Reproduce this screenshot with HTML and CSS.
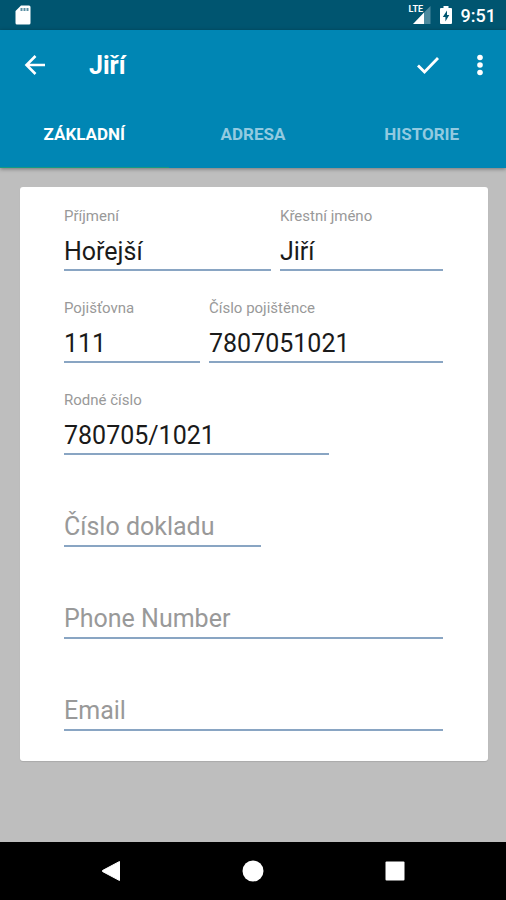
FILE: index.html
```html
<!DOCTYPE html>
<html lang="cs">
<head>
  <meta charset="UTF-8">
  <meta name="viewport" content="width=device-width, initial-scale=1.0">
  <title>Jiří</title>
  <link rel="stylesheet" href="styles.css">
</head>
<body>
  <!-- Status bar -->
  <div class="status-bar">
    <svg class="sd-icon" width="16" height="20" viewBox="0 0 16 20">
      <path d="M6 0.5H14a1.5 1.5 0 0 1 1.500 1.500V18a1.500 1.500 0 0 1-1.500 1.500H2A1.500 1.500 0 0 1 0.500 18V6z" fill="#fff"/>
      <path d="M6.500 3v3M9.500 3v3M12.500 3v3" stroke="#5a8fa3" stroke-width="2"/>
    </svg>
    <div class="status-right">
      <div class="signal">
        <svg width="18" height="18" viewBox="0 0 18 18">
          <path d="M17.500 0V18H11V6.500z" fill="#4d8a9e"/>
          <path d="M11 6.500V18H0z" fill="#fff"/>
        </svg>
        <span class="lte">LTE</span>
      </div>
      <svg width="12" height="18" viewBox="0 0 12 18">
        <path d="M3.500 0h5v2H11a1 1 0 0 1 1 1v14a1 1 0 0 1-1 1H1a1 1 0 0 1-1-1V3a1 1 0 0 1 1-1h2.500z" fill="#fff"/>
        <path d="M7 4.500L2.800 11H5.400v4.500L9.300 9H7z" fill="#005570"/>
      </svg>
      <span class="clock">9:51</span>
    </div>
  </div>

  <!-- App bar with tabs -->
  <header class="app-bar">
    <div class="toolbar">
      <button class="icon-btn" aria-label="Zpět">
        <svg width="22" height="22" viewBox="0 0 22 22">
          <path d="M21 11H3M11.500 2L2.500 11l9 9" fill="none" stroke="#fff" stroke-width="2.600"/>
        </svg>
      </button>
      <h1>Jiří</h1>
      <button class="icon-btn" aria-label="Uložit">
        <svg width="24" height="20" viewBox="0 0 24 20">
          <path d="M2 10.500l6.500 6.500L22 3" fill="none" stroke="#fff" stroke-width="2.800"/>
        </svg>
      </button>
      <button class="icon-btn" aria-label="Další možnosti">
        <svg width="8" height="22" viewBox="0 0 8 22">
          <circle cx="4" cy="3.500" r="2.800" fill="#fff"/>
          <circle cx="4" cy="11" r="2.800" fill="#fff"/>
          <circle cx="4" cy="18.500" r="2.800" fill="#fff"/>
        </svg>
      </button>
    </div>
    <nav class="tabs">
      <button class="tab active">ZÁKLADNÍ</button>
      <button class="tab">ADRESA</button>
      <button class="tab">HISTORIE</button>
    </nav>
  </header>

  <main>
    <form class="card">
      <div class="row names">
        <div class="field">
          <label for="surname">Příjmení</label>
          <input type="text" id="surname" value="Hořejší">
        </div>
        <div class="field">
          <label for="firstname">Křestní jméno</label>
          <input type="text" id="firstname" value="Jiří">
        </div>
      </div>
      <div class="row insurance">
        <div class="field">
          <label for="insurer">Pojišťovna</label>
          <input type="text" id="insurer" value="111">
        </div>
        <div class="field">
          <label for="insuredNo">Číslo pojištěnce</label>
          <input type="text" id="insuredNo" value="7807051021">
        </div>
      </div>
      <div class="field birth-number">
        <label for="birthNo">Rodné číslo</label>
        <input type="text" id="birthNo" value="780705/1021">
      </div>
      <div class="field empty document">
        <label for="documentNo">Číslo dokladu</label>
        <input type="text" id="documentNo">
      </div>
      <div class="field empty">
        <label for="phone">Phone Number</label>
        <input type="tel" id="phone">
      </div>
      <div class="field empty">
        <label for="email">Email</label>
        <input type="email" id="email">
      </div>
    </form>
  </main>

  <!-- System navigation -->
  <footer class="nav-bar">
    <button aria-label="Back">
      <svg width="22" height="22" viewBox="0 0 22 22">
        <path d="M19.500 1.500v19L2.500 11.500v-1z" fill="#fff" stroke="#fff" stroke-linejoin="round"/>
      </svg>
    </button>
    <button aria-label="Home">
      <svg width="22" height="22" viewBox="0 0 22 22">
        <circle cx="11" cy="11" r="10.500" fill="#fff"/>
      </svg>
    </button>
    <button aria-label="Recent">
      <svg width="22" height="22" viewBox="0 0 22 22">
        <rect x="1.500" y="1.500" width="19" height="19" rx="1" fill="#fff"/>
      </svg>
    </button>
  </footer>
</body>
</html>
```
FILE: styles.css
```css
* {
  box-sizing: border-box;
}
body {
  margin: 0;
  min-height: 100vh;
  display: flex;
  flex-direction: column;
  font-family: Roboto, sans-serif;
  background-color: #bebebe;
}
svg {
  display: block;
}
button {
  padding: 0;
  border: none;
  background: none;
  font-family: inherit;
  cursor: pointer;
}
.status-bar {
  display: flex;
  align-items: center;
  justify-content: space-between;
  height: 30px;
  padding: 0 10px 0 15px;
  background-color: #005570;
  color: #fff;
}
.status-right {
  display: flex;
  align-items: center;
  gap: 9px;
}
.signal {
  position: relative;
}
.lte {
  position: absolute;
  top: -1px;
  left: -4px;
  font-size: 9px;
  line-height: 9px;
  font-weight: 700;
}
.clock {
  font-size: 18px;
  font-weight: 500;
}
.app-bar {
  background-color: #0086b4;
  box-shadow: 0 1px 4px rgba(0, 0, 0, 0.4);
}
.toolbar {
  display: flex;
  align-items: center;
  height: 70px;
  padding: 0 5px 0 14px;
}
.icon-btn {
  display: flex;
  align-items: center;
  justify-content: center;
  width: 42px;
  height: 42px;
}
.icon-btn + .icon-btn {
  margin-left: 10px;
}
h1 {
  flex: 1;
  margin: 0;
  padding-left: 33px;
  color: #fff;
  font-size: 25px;
  font-weight: 700;
}
.tabs {
  display: grid;
  grid-template-columns: repeat(3, 1fr);
}
.tab {
  height: 68px;
  border-top: 1px solid transparent;
  border-bottom: 1px solid transparent;
  color: #92cae0;
  font-size: 17px;
  font-weight: 700;
}
.tab.active {
  color: #fff;
  border-bottom-color: #159a83;
}
main {
  flex: 1;
  padding: 19px 18px 19px 20px;
}
.card {
  display: flex;
  flex-direction: column;
  gap: 28px;
  padding: 20px 45px 30px 44px;
  background-color: #fff;
  border-radius: 3px;
  box-shadow: 0 1px 1px rgba(0, 0, 0, 0.1);
}
.row {
  display: grid;
  gap: 9px;
}
.names {
  grid-template-columns: 207fr 163fr;
}
.insurance {
  grid-template-columns: 136fr 234fr;
}
.field {
  display: grid;
  grid-template-rows: 18px 46px;
  min-width: 0;
}
.birth-number {
  width: 70%;
}
.document {
  width: 52%;
}
label {
  color: #999;
  font-size: 15px;
  line-height: 18px;
}
input {
  width: 100%;
  min-width: 0;
  padding: 8px 0 0;
  border: none;
  border-bottom: 2px solid #89a5c3;
  background: transparent;
  color: #1a1a1a;
  font-family: inherit;
  font-size: 25px;
  outline: none;
}
.empty label,
.empty input {
  grid-row: 2;
  grid-column: 1;
}
.empty label {
  padding-top: 6px;
  font-size: 25px;
  line-height: 40px;
}
.nav-bar {
  display: grid;
  grid-template-columns: repeat(3, 1fr);
  height: 58px;
  padding: 0 40px;
  background-color: #000;
}
.nav-bar button {
  display: flex;
  align-items: center;
  justify-content: center;
}
```
